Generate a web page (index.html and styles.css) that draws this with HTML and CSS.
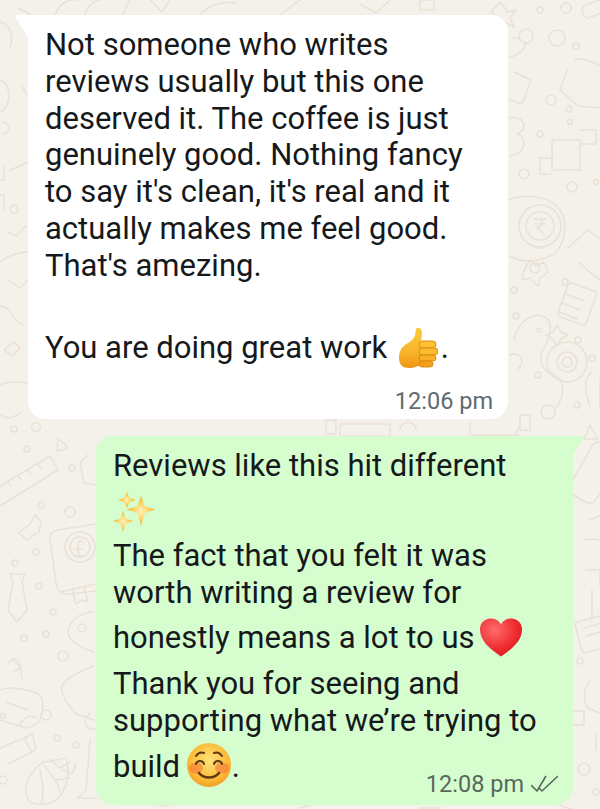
FILE: index.html
```html
<!DOCTYPE html>
<html lang="en">
<head>
  <meta charset="UTF-8" />
  <meta name="viewport" content="width=device-width, initial-scale=1.0"/>
  <title>Chat</title>
  <link rel="stylesheet" href="styles.css">
</head>
<body>
  <!-- doodle wallpaper -->
  <svg class="wallpaper" width="600" height="809" viewBox="0 0 600 809" fill="none" aria-hidden="true">
    <path d="M55 15c4-12 14-17 24-15M85 15c2-9 8-14 14-15M122 15l8-15M150 0l12 12 8-12M200 15c8-10 22-14 36-12M280 15l20-15M360 4l16 9 14-13M420 0h14v10h-14zM500 2l8 10 8-2-6 8 4 9-9-5-8 6 2-10-8-6z"/>
    <circle cx="526" cy="36" r="7"/><circle cx="557" cy="38" r="8"/><circle cx="576" cy="46" r="3"/><circle cx="540" cy="10" r="3"/><circle cx="566" cy="8" r="5"/>
    <rect x="582" y="4" width="30" height="13" rx="6" transform="rotate(-20 590 10)"/>
    <path d="M512 38h8M526 43c-2 8-8 12-16 14"/>
    <path d="M514 72l17 8-9 24-13-5"/><path d="M575 60c10-4 20 4 30 8M568 68l-8 22 18 16 24 2"/>
    <circle cx="551" cy="100" r="5"/><circle cx="570" cy="122" r="2.5"/><circle cx="540" cy="134" r="3"/><circle cx="569" cy="109" r="3"/>
    <path d="M510 118c8-2 14 2 14 8 0 5-4 7-7 8 4 1 7 4 7 9 0 8-8 12-14 13"/>
    <rect x="552" y="140" width="28" height="30" /><path d="M552 158h-12v16h12M580 130h16v14h-16"/>
    <circle cx="524" cy="174" r="5"/><circle cx="572" cy="187" r="5"/><circle cx="596" cy="182" r="2.5"/>
    <path d="M508 200c16-6 40-6 52 10 8 12 6 30-4 42-12 10-32 12-46 4"/>
    <circle cx="540" cy="226" r="21"/><circle cx="540" cy="226" r="14"/>
    <path d="M534 219h12M534 224h12M537 219c7 0 7 8 0 8l7 8"/>
    <path d="M568 248l20-18 14 10M578 262l24 20"/>
    <circle cx="535" cy="268" r="5"/><circle cx="565" cy="282" r="3"/><circle cx="514" cy="290" r="3"/>
    <path d="M535 248h8M530 260l6 6 8-4 4 10-8 6-2 8-8-8-8 2 2-10z"/>
    <rect x="562" y="286" width="30" height="36" rx="3" transform="rotate(20 577 304)"/>
    <path d="M566 294l18 7M562 303l18 7M559 312l18 7"/>
    <circle cx="516" cy="316" r="3"/><circle cx="539" cy="330" r="2"/>
    <path d="M557 325l4 7 7 3-7 4-4 7-4-7-7-4 7-3z"/>
    <circle cx="567" cy="362" r="20"/><circle cx="567" cy="362" r="10"/><circle cx="567" cy="362" r="5"/>
    <circle cx="592" cy="358" r="3"/><circle cx="578" cy="340" r="3"/><circle cx="538" cy="375" r="3"/><circle cx="577" cy="405" r="3"/><circle cx="548" cy="412" r="7"/>
    <path d="M514 340c2-14 16-28 28-24 14 4 8 22 0 36-4 10 2 20 14 24 8 4 10 18 0 32M510 355c10-4 16 6 8 14"/>
    <path d="M592 372c-8 4-8 20-2 34M600 378v30"/>
    <path d="M520 415h10v15h-10zM590 425l8 14h-14zM326 420h10v14h-10zM340 424h50v12h-50zM400 430a8 8 0 0 1 16 0M470 422v13h50M520 425l-6 12"/>
    <rect x="580" y="440" width="30" height="60" rx="8" transform="rotate(30 590 470)"/>
    <path d="M590 520l10-4M584 540c8-2 14-1 20 2M586 570h14v14M592 590v30"/>
    <rect x="578" y="617" width="40" height="32" rx="3" transform="rotate(-15 598 633)"/>
    <path d="M584 628l18-5M586 636l18-5"/>
    <circle cx="580" cy="661" r="3"/><circle cx="584" cy="769" r="6"/><circle cx="596" cy="792" r="3"/>
    <path d="M590 680c-6 8-8 20-2 28l14 6M574 711h10v14h-10M596 734v16"/>
    <path d="M160 806l20-3M300 808l10-3M420 808h20M560 805l10 4"/>
    <path d="M18 8l12 6M0 22c10 2 14 14 10 26M0 80c8 2 10 12 8 22-2 6-6 10-8 10M22 86l5 9M3 122a6 6 0 1 1 0 12M4 166v14h-8M0 195h4v14M10 170c6-2 14-6 18-8M14 205a4 4 0 1 0 .1 0M8 232l8 4 10-10M0 262c8-6 18-10 28-10M8 280l12 8 8-8"/>
    <path d="M0 306c6 0 12 6 14 12l10 8M4 350l10-8 6 6-8 8zM0 385c8-4 18-4 28-2"/>
    <path d="M0 415c6 4 12 4 20-2M0 470l-2 4"/>
    <circle cx="14" cy="429" r="3"/><circle cx="36" cy="427" r="4.5"/><circle cx="27" cy="449" r="3"/><circle cx="72" cy="468" r="3"/><circle cx="70" cy="512" r="5"/><circle cx="41" cy="505" r="3"/>
    <path d="M66 445l-8-6-1 12 10-2zM88 455l-8 8 4 20 12 2"/>
    <path d="M0 486l50-30 8 14-58 36M8 482l3 4M18 476l3 4M28 470l3 4M38 464l3 4"/>
    <path d="M35 515l-4 8-12 10 8 7 12-8 2-10z"/>
    <circle cx="36" cy="552" r="3"/><circle cx="15" cy="563" r="3"/><circle cx="39" cy="586" r="3"/><circle cx="53" cy="612" r="3"/><circle cx="46" cy="634" r="3"/><circle cx="24" cy="638" r="3"/><circle cx="63" cy="656" r="5"/><circle cx="46" cy="715" r="5"/><circle cx="57" cy="738" r="3"/><circle cx="76" cy="745" r="3"/><circle cx="3" cy="780" r="4"/><circle cx="3" cy="716" r="2.5"/>
    <path d="M96 524l-38 6c-6 1-9 4-8 9l6 44c1 8 6 12 14 11l26-3M60 592l36-8"/>
    <circle cx="80" cy="547" r="15"/><circle cx="80" cy="547" r="10"/>
    <path d="M83 542c-3-3-6 0-5 4l1 9M75 549h7M74 556h9M72 590l4 14 6-4 6 2-4-15"/>
    <path d="M10 574h15l-3 8 5 28-10 12-9-12 5-28z"/>
    <path d="M94 612c-14 0-24 8-26 20 0 8 12 16 26 20"/><circle cx="82" cy="628" r="4"/>
    <path d="M0 690c8-4 20-2 34 2 8 2 10 8 8 22-2 8-6 12-16 14l-26-8M12 660l8 6 2 12M6 702l22 8M20 725c4-8 10-10 16-8M8 665a6 6 0 1 1 6 6"/>
    <path d="M94 666c-16 6-28 12-32 20-2 6 2 14 14 28l18 6M90 714a8 8 0 1 0 6 0M90 740l-4 50-8 8h18"/>
    <path d="M0 748l24-10 8 14-24 12M24 738l8-4 4 14-4 4"/>
    <path d="M28 800c-6-14 2-30 16-38l22-4c4 14 2 30-8 40-8 8-24 8-30 2zM40 770c2 10 4 20 2 32M44 766c8 8 14 16 16 26M50 760l10 8 10-6M62 770l10 4 4-10M56 780l14-2"/>
  </svg>

  <main class="chat">
    <section class="bubble incoming">
      <p class="text">Not someone who writes<br>reviews usually but this one<br>deserved it. The coffee is just<br>genuinely good. Nothing fancy<br>to say it's clean, it's real and it<br>actually makes me feel good.<br>That's amezing.</p>
      <p class="text closing">You are doing great work
        <svg class="emoji thumb" viewBox="0 0 40 41" aria-hidden="true">
          <defs><linearGradient id="gThumb" x1="0" y1="0" x2="0" y2="1"><stop offset="0" stop-color="#fdc93a"/><stop offset=".6" stop-color="#f9b52a"/><stop offset="1" stop-color="#ee9417"/></linearGradient></defs>
          <path d="M19 1c3-1 5 1 5 5 0 4-1 8-2 11l1 20c-2 2-7 4-12 4-6 0-10-3-10-10 0-6 2-10 6-13 5-3 9-6 10-10 1-3 0-6 2-7z" fill="url(#gThumb)"/>
          <rect x="21" y="14" width="17" height="7" rx="3.500" fill="#fcc232" stroke="#dd8a12"/>
          <rect x="21" y="21" width="19" height="7" rx="3.500" fill="#fbbd2e" stroke="#dd8a12"/>
          <rect x="21" y="28" width="17" height="6" rx="3" fill="#f8b025" stroke="#dd8a12"/>
          <rect x="21" y="34" width="14" height="6" rx="3" fill="#f3a01d" stroke="#dd8a12"/>
        </svg><span class="dot">.</span></p>
      <div class="meta"><span class="time">12:06 pm</span></div>
    </section>

    <section class="bubble outgoing">
      <p class="text">Reviews like this hit different</p>
      <svg class="emoji sparkles" viewBox="0 0 44 40" aria-hidden="true">
        <defs><radialGradient id="gStar"><stop offset="0" stop-color="#fff3c4"/><stop offset=".55" stop-color="#fcd25c"/><stop offset="1" stop-color="#f5b02e"/></radialGradient></defs>
        <path d="M14 0l2.500 5.500 6 2.500-6 2.500L14 16l-2.500-5.500-6-2.500 6-2.500z" fill="url(#gStar)"/>
        <path d="M28 4l3.500 10 10.500 3.500L31.500 21 28 34l-3.500-13L14 17.500 24.500 14z" fill="url(#gStar)"/>
        <path d="M10 19l2.500 7.500 7.500 2.500-7.500 2.500L10 40l-2.500-8.500L0 29l7.500-2.500z" fill="url(#gStar)"/>
      </svg>
      <p class="text">The fact that you felt it was<br>worth writing a review for</p>
      <p class="text tall">honestly means a lot to us
        <svg class="emoji heart" viewBox="0 0 44 40" aria-hidden="true">
          <defs><radialGradient id="gHeart" cx=".35" cy=".3" r=".8"><stop offset="0" stop-color="#ff6b6b"/><stop offset=".6" stop-color="#ef2f33"/><stop offset="1" stop-color="#d8141e"/></radialGradient></defs>
          <path d="M22 39C12 32 1 24 1 12 1 5 6 1 12 1c4 0 8 2 10 6 2-4 6-6 10-6 6 0 11 4 11 11 0 12-11 20-21 27z" fill="url(#gHeart)"/>
        </svg></p>
      <p class="text thanks">Thank you for seeing and<br>supporting what we’re trying to</p>
      <p class="text tall last">build
        <svg class="emoji smile" viewBox="0 0 44 44" aria-hidden="true">
          <defs><radialGradient id="gFace" cx=".5" cy=".4" r=".65"><stop offset="0" stop-color="#fde37a"/><stop offset=".7" stop-color="#fbb934"/><stop offset="1" stop-color="#ef9320"/></radialGradient></defs>
          <circle cx="22" cy="22" r="22" fill="url(#gFace)"/>
          <ellipse cx="9" cy="25" rx="7" ry="5.500" fill="#f2703a" opacity=".55"/><ellipse cx="35" cy="25" rx="7" ry="5.500" fill="#f2703a" opacity=".55"/>
          <g fill="none" stroke="#5d3a12" stroke-width="2" stroke-linecap="round">
            <path d="M9 21c1-4 7-4 8 0M27 21c1-4 7-4 8 0M9 13c2-3 5-4 8-3M35 13c-2-3-5-4-8-3"/>
            <path d="M12 30c5 6 15 6 20 0" stroke-width="2.600"/>
          </g>
        </svg><span class="dot">.</span></p>
      <div class="meta sent">
        <span class="time">12:08 pm</span>
        <svg class="ticks" viewBox="0 0 27 18" aria-hidden="true">
          <path d="M0 10l6 6L15 1M8 13l3 3L27 1" fill="none" stroke="#56695c" stroke-width="1.600"/>
        </svg>
      </div>
    </section>
  </main>
</body>
</html>
```

FILE: styles.css
```css
html, body {
  margin: 0;
  padding: 0;
}

body {
  width: 600px;
  height: 809px;
  overflow: hidden;
  position: relative;
  background: #f4f1ea;
  font-family: Roboto, "Noto Sans", sans-serif;
  color: #15191b;
}

.wallpaper {
  position: absolute;
  top: 0;
  left: 0;
  stroke: #e9e1d6;
  stroke-width: 1.5;
  stroke-linecap: round;
  stroke-linejoin: round;
}

.chat {
  position: relative;
  display: flex;
  flex-direction: column;
  gap: 17px;
  padding-top: 15px;
}

.bubble {
  position: relative;
  box-sizing: border-box;
  padding: 12px 15px 0 17px;
}

.bubble::before {
  content: "";
  position: absolute;
  top: 0;
  width: 18px;
  height: 22px;
  background: inherit;
}

.incoming {
  margin-left: 28px;
  width: 480px;
  height: 404px;
  background: #fff;
  border-radius: 0 16px 18px 18px;
}

.incoming::before {
  left: -14px;
  clip-path: polygon(0 0, 100% 0, 100% 100%, 78% 100%);
}

.outgoing {
  margin-left: 96px;
  width: 477px;
  height: 369px;
  background: #d6fdce;
  border-radius: 16px 0 18px 18px;
}

.outgoing::before {
  right: -12px;
  width: 14px;
  clip-path: polygon(0 0, 100% 0, 0 100%);
}

.text {
  margin: 0;
  font-size: 31px;
  line-height: 36.8px;
}

.closing {
  margin-top: 45px;
}

.emoji {
  vertical-align: middle;
}

.dot {
  margin-left: 3px;
}

.thumb {
  width: 40px;
  height: 41px;
  margin: -4px 0 0 3px;
}

.sparkles {
  display: block;
  width: 44px;
  height: 40px;
  margin: 7px 0 6px 0;
}

.tall {
  margin-top: 4px;
  line-height: 46px;
}

.heart {
  width: 44px;
  height: 41px;
  margin-left: -3px;
  vertical-align: -10px;
}

.thanks {
  margin-top: 5px;
}

.last {
  margin-top: 3px;
}

.smile {
  width: 44px;
  height: 44px;
  margin: 0 -2px 0 -1px;
  vertical-align: -10px;
}

.meta {
  display: flex;
  justify-content: flex-end;
  align-items: center;
  gap: 7px;
  margin-top: 19px;
}

.time {
  font-size: 23.5px;
  line-height: 28px;
  color: #5f6b70;
}

.sent {
  margin-top: -20px;
}

.sent .time {
  color: #56695c;
}

.ticks {
  width: 27px;
  height: 18px;
}
```
